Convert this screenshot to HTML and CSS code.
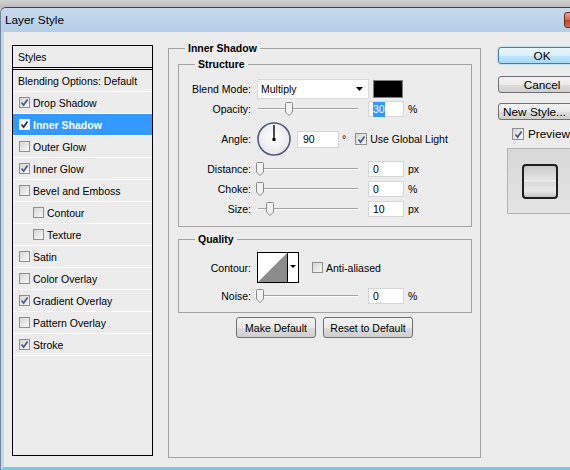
FILE: index.html
```html
<!DOCTYPE html>
<html>
<head>
<meta charset="utf-8">
<title>Layer Style</title>
<link rel="stylesheet" href="styles.css">
</head>
<body>
<div class="topstrip"></div>
<div class="window">
  <div class="titlebar">
    <span class="title">Layer Style</span>
    <span class="close"></span>
  </div>
  <div class="client">
    <div class="stylelist">
      <div class="list-head">Styles</div>
      <div class="lrow plain">Blending Options: Default</div>
      <div class="lrow"><span class="cb on"><svg viewBox="0 0 9 9"><path d="M1.5 4.5 L3.6 7 L7.6 1.4"/></svg></span>Drop Shadow</div>
      <div class="lrow sel"><span class="cb on"><svg viewBox="0 0 9 9"><path d="M1.5 4.5 L3.6 7 L7.6 1.4"/></svg></span>Inner Shadow</div>
      <div class="lrow"><span class="cb"></span>Outer Glow</div>
      <div class="lrow"><span class="cb on"><svg viewBox="0 0 9 9"><path d="M1.5 4.5 L3.6 7 L7.6 1.4"/></svg></span>Inner Glow</div>
      <div class="lrow"><span class="cb"></span>Bevel and Emboss</div>
      <div class="lrow sub"><span class="cb"></span>Contour</div>
      <div class="lrow sub"><span class="cb"></span>Texture</div>
      <div class="lrow"><span class="cb"></span>Satin</div>
      <div class="lrow"><span class="cb"></span>Color Overlay</div>
      <div class="lrow"><span class="cb on"><svg viewBox="0 0 9 9"><path d="M1.5 4.5 L3.6 7 L7.6 1.4"/></svg></span>Gradient Overlay</div>
      <div class="lrow"><span class="cb"></span>Pattern Overlay</div>
      <div class="lrow"><span class="cb on"><svg viewBox="0 0 9 9"><path d="M1.5 4.5 L3.6 7 L7.6 1.4"/></svg></span>Stroke</div>
    </div>

    <fieldset class="group outer">
      <legend>Inner Shadow</legend>
      <fieldset class="group structure">
        <legend>Structure</legend>
        <div class="srow first">
          <span class="lbl">Blend Mode:</span>
          <span class="select">Multiply<svg class="arrow" viewBox="0 0 7 4"><path d="M0 0 H7 L3.5 4 Z"/></svg></span>
          <span class="swatch"></span>
        </div>
        <div class="srow">
          <span class="lbl">Opacity:</span>
          <span class="slider"><span class="thumb" style="left:29px"><svg viewBox="0 0 8 14"><path d="M1.5 0.5 H6.5 Q7.5 0.5 7.5 1.5 V10 L4 13.5 L0.5 10 V1.5 Q0.5 0.5 1.5 0.5 Z"/></svg></span></span>
          <span class="num"><span class="hl">30</span></span>
          <span class="unit">%</span>
        </div>
        <div class="srow tall">
          <span class="lbl">Angle:</span>
          <svg class="dial" viewBox="0 0 34 34">
            <defs><radialGradient id="dg" cx="0.5" cy="0.45" r="0.6"><stop offset="0" stop-color="#ffffff"/><stop offset="1" stop-color="#e4e6ea"/></radialGradient></defs>
            <circle cx="17" cy="17" r="16" fill="url(#dg)" stroke="#4f5b76" stroke-width="1.6"/>
            <line x1="17" y1="17.5" x2="17" y2="3" stroke="#000" stroke-width="1.4"/>
            <rect x="15.5" y="16" width="3" height="3" fill="#000"/>
          </svg>
          <span class="num angle">90</span>
          <span class="deg">°</span>
          <span class="cb big on"><svg viewBox="0 0 9 9"><path d="M1.5 4.5 L3.6 7 L7.6 1.4"/></svg></span>
          <span class="cbtext">Use Global Light</span>
        </div>
        <div class="srow">
          <span class="lbl">Distance:</span>
          <span class="slider"><span class="thumb" style="left:0px"><svg viewBox="0 0 8 14"><path d="M1.5 0.5 H6.5 Q7.5 0.5 7.5 1.5 V10 L4 13.5 L0.5 10 V1.5 Q0.5 0.5 1.5 0.5 Z"/></svg></span></span>
          <span class="num">0</span>
          <span class="unit">px</span>
        </div>
        <div class="srow">
          <span class="lbl">Choke:</span>
          <span class="slider"><span class="thumb" style="left:0px"><svg viewBox="0 0 8 14"><path d="M1.5 0.5 H6.5 Q7.5 0.5 7.5 1.5 V10 L4 13.5 L0.5 10 V1.5 Q0.5 0.5 1.5 0.5 Z"/></svg></span></span>
          <span class="num">0</span>
          <span class="unit">%</span>
        </div>
        <div class="srow">
          <span class="lbl">Size:</span>
          <span class="slider"><span class="thumb" style="left:10px"><svg viewBox="0 0 8 14"><path d="M1.5 0.5 H6.5 Q7.5 0.5 7.5 1.5 V10 L4 13.5 L0.5 10 V1.5 Q0.5 0.5 1.5 0.5 Z"/></svg></span></span>
          <span class="num">10</span>
          <span class="unit">px</span>
        </div>
      </fieldset>

      <fieldset class="group quality">
        <legend>Quality</legend>
        <div class="srow contour-row">
          <span class="lbl">Contour:</span>
          <svg class="contour" viewBox="0 0 42 31">
            <rect x="0.5" y="0.5" width="41" height="30" fill="#fff" stroke="#000"/>
            <path d="M1 30 L30 1 V30 Z" fill="#8c8c8c"/>
            <line x1="30.5" y1="0.5" x2="30.5" y2="30.5" stroke="#000"/>
            <path d="M33 13 H39 L36 16 Z" fill="#000"/>
          </svg>
          <span class="cb aa"></span>
          <span class="cbtext">Anti-aliased</span>
        </div>
        <div class="srow noise-row">
          <span class="lbl">Noise:</span>
          <span class="slider"><span class="thumb" style="left:0px"><svg viewBox="0 0 8 14"><path d="M1.5 0.5 H6.5 Q7.5 0.5 7.5 1.5 V10 L4 13.5 L0.5 10 V1.5 Q0.5 0.5 1.5 0.5 Z"/></svg></span></span>
          <span class="num">0</span>
          <span class="unit">%</span>
        </div>
      </fieldset>

      <div class="defaults">
        <button class="btn mk">Make Default</button>
        <button class="btn rs">Reset to Default</button>
      </div>
    </fieldset>

    <div class="side">
      <button class="sbtn ok">OK</button>
      <button class="sbtn cancel">Cancel</button>
      <button class="sbtn newstyle">New Style...</button>
      <div class="preview-row">
        <span class="cb big on"><svg viewBox="0 0 9 9"><path d="M1.5 4.5 L3.6 7 L7.6 1.4"/></svg></span>
        <span class="pv-text">Preview</span>
      </div>
      <div class="preview-box"><div class="preview-swatch"></div></div>
    </div>
  </div>
</div>
</body>
</html>
```

FILE: styles.css
```css
* { box-sizing: border-box; }
html, body { margin: 0; padding: 0; }
body {
  width: 570px;
  height: 470px;
  overflow: hidden;
  background: #c4c4c4;
  font-family: "Liberation Sans", Arial, sans-serif;
  font-size: 10.5px;
  color: #000;
}
.topstrip {
  height: 7px;
  background: linear-gradient(#d3d3d3, #bcbcbc);
}
.window {
  width: 610px;
  height: 463px;
  border-top: 1px solid #3b4250;
  border-left: 1px solid #71849b;
  border-top-left-radius: 6px;
  background: #bdd3ea;
  display: flex;
  flex-direction: column;
  overflow: hidden;
}
.titlebar {
  height: 24px;
  flex: none;
  display: flex;
  align-items: center;
  padding-left: 4px;
  background: linear-gradient(#c8daee, #b5cde7);
}
.title { font-size: 11.8px; color: #000; }
.close {
  margin-left: auto;
  margin-right: 3px;
  width: 43px;
  height: 16px;
  border: 1px solid #6e2a1e;
  border-radius: 3px;
  background: linear-gradient(#e9a596, #d4644d 50%, #c2412a 51%, #d16b4f);
}
.client {
  flex: 1;
  display: flex;
  align-items: flex-start;
  border-left: 3px solid #c6d8ec;
  border-bottom: 3px solid #79c7e3;
  background: #ececec;
  padding-left: 8px;
}

/* Styles list */
.stylelist {
  flex: none;
  margin-top: 13px;
  width: 141px;
  height: 411px;
  border: 1px solid #000;
  background: #ececec;
}
.list-head {
  height: 24px;
  border-bottom: 3px double #000;
  padding-left: 5px;
  display: flex;
  align-items: center;
}
.lrow {
  height: 22px;
  border-bottom: 1px solid #fff;
  display: flex;
  align-items: center;
  padding-left: 6px;
  white-space: nowrap;
}
.lrow.plain { padding-left: 5px; }
.lrow.sub { padding-left: 20px; }
.lrow.sel {
  background: #3399ff;
  color: #fff;
  font-weight: bold;
}
.cb {
  flex: none;
  width: 11px;
  height: 11px;
  margin-right: 3px;
  border: 1px solid #8e8f8f;
  background: linear-gradient(135deg, #d6d6d6, #f8f8f8);
  display: inline-flex;
  align-items: center;
  justify-content: center;
}
.cb svg { width: 9px; height: 9px; }
.cb svg path { fill: none; stroke: #4a5b8a; stroke-width: 1.7; }
.lrow.sel .cb { background: #fff; border-color: #dfe9f7; }
.lrow.sel .cb svg path { stroke: #1e2c55; }
.cb.big { width: 12px; height: 12px; }

/* Main fieldsets */
fieldset.group {
  margin: 0;
  padding: 0;
  min-width: 0;
  border: 1px solid #a3a3a3;
}
fieldset.group > legend {
  margin-left: 16px;
  padding: 0 3px;
  font-weight: bold;
  line-height: 14px;
}
fieldset.outer {
  flex: none;
  margin: 9px 0 0 15px;
  width: 313px;
  height: 417px;
}
fieldset.structure {
  margin: 2px 0 0 9px;
  width: 294px;
  padding-bottom: 7px;
}
fieldset.quality {
  margin: 5px 0 0 9px;
  width: 294px;
  padding-bottom: 6px;
}
.srow {
  display: flex;
  align-items: center;
  height: 20px;
  white-space: nowrap;
}
.srow.first { margin-top: 8px; }
.srow.tall { height: 40px; }
.lbl {
  flex: none;
  width: 72px;
  margin-right: 6px;
  text-align: right;
}
.select {
  flex: none;
  width: 112px;
  height: 20px;
  background: #fff;
  border: 1px solid #dadada;
  padding-left: 3px;
  display: flex;
  align-items: center;
}
.select .arrow {
  margin-left: auto;
  margin-right: 5px;
  width: 7px;
  height: 4px;
}
.swatch {
  flex: none;
  margin-left: 4px;
  width: 30px;
  height: 18px;
  background: #000;
  border: 1px solid #7d7d7d;
}
.slider {
  position: relative;
  flex: none;
  margin-left: -1px;
  width: 102px;
  height: 14px;
  background:
    linear-gradient(#a4a4a4, #a4a4a4) no-repeat 2px 6px / 100px 1px,
    linear-gradient(#ffffff, #ffffff) no-repeat 2px 7px / 100px 1px;
}
.thumb {
  position: absolute;
  top: 0;
  width: 8px;
  height: 14px;
}
.thumb svg { width: 8px; height: 14px; display: block; }
.thumb svg path { fill: #f1f1f1; stroke: #8a8a8a; stroke-width: 1; }
.num {
  flex: none;
  margin-left: 10px;
  width: 36px;
  height: 16px;
  background: #fff;
  border: 1px solid #d6d6d6;
  padding-left: 4px;
  display: flex;
  align-items: center;
}
.hl { background: #3399ff; color: #fff; padding: 1px 0; line-height: 13px; }
.num.angle {
  margin-left: 6px;
  width: 42px;
  height: 17px;
  padding-left: 5px;
}
.unit { margin-left: 4px; }
.deg { margin-left: 3px; }
.dial { flex: none; width: 34px; height: 34px; }
.srow .cb.big { margin-left: 9px; }
.contour-row { height: 31px; margin-top: 6px; }
.contour { flex: none; width: 42px; height: 31px; }
.cb.aa { margin-left: 13px; }
.noise-row { margin-top: 3px; }
.defaults {
  display: flex;
  justify-content: center;
  gap: 7px;
  margin-top: 4px;
}
.btn {
  height: 21px;
  border: 1px solid #707070;
  border-radius: 3px;
  background: linear-gradient(#f3f3f3, #ebebeb 50%, #dddddd 51%, #cfcfcf);
  font-family: inherit;
  font-size: 10.5px;
  color: #000;
  padding: 0;
}
.btn.mk { width: 80px; }
.btn.rs { width: 90px; }

/* Right side */
.side {
  flex: none;
  margin-top: 15px;
  margin-left: 17px;
  width: 90px;
  display: flex;
  flex-direction: column;
}
.sbtn {
  width: 88px;
  height: 17px;
  border: 1px solid #707070;
  border-radius: 3px;
  background: linear-gradient(#f3f3f3, #ebebeb 50%, #dddddd 51%, #cfcfcf);
  font-family: inherit;
  font-size: 11.8px;
  line-height: 14px;
  color: #000;
  padding: 0;
  white-space: nowrap;
  overflow: hidden;
}
.sbtn.ok {
  border-color: #3c7fb1;
  background: linear-gradient(#eaf6fd, #d9f0fc 50%, #bee6fd 51%, #a7d9f5);
  box-shadow: 0 0 2px #62c3ee;
}
.sbtn.cancel { margin-top: 12px; }
.sbtn.newstyle { margin-top: 10px; padding-left: 4px; text-align: left; }
.preview-row {
  margin-top: 8px;
  height: 12px;
  display: flex;
  align-items: center;
  padding-left: 14px;
}
.pv-text { font-size: 11.8px; margin-left: 1px; }
.preview-box {
  margin-top: 8px;
  margin-left: 9px;
  width: 66px;
  height: 66px;
  border: 1px solid #b4b4b4;
  background: linear-gradient(#d8d8d8, #e4e4e4);
  display: flex;
  align-items: center;
  justify-content: center;
}
.preview-swatch {
  width: 36px;
  height: 35px;
  border: 2px solid #1f1f1f;
  border-radius: 4px;
  background: linear-gradient(#c9c9c9, #e5e5e5 45%, #f0f0f0 48%, #d9d9d9 52%, #e9e9e9 80%, #c6c6c6);
}
```
